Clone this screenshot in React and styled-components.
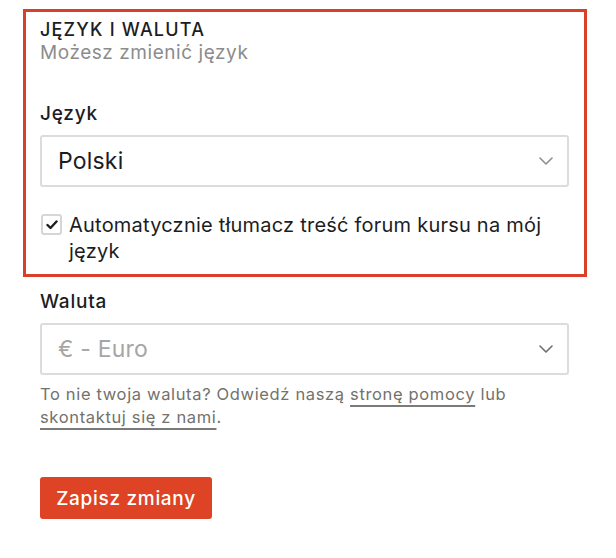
import React, { useState } from 'react';
import styled, { createGlobalStyle } from 'styled-components';

const GlobalStyle = createGlobalStyle`
  body {
    margin: 0;
    background: #fff;
    font-family: Inter, "Noto Sans", sans-serif;
    color: #1c1d1f;
  }
`;

const Page = styled.div`
  width: 529px;
  padding: 9px 0 0 40px;
`;

const Highlight = styled.section`
  margin: 0 -18px 0 -17px;
  border: 3px solid #d8402a;
  padding: 6px 15px 10px 14px;
`;

const Title = styled.h2`
  margin: 0;
  font-size: 18px;
  font-weight: 500;
  line-height: 23px;
  letter-spacing: 1.2px;
  text-transform: uppercase;
`;

const Subtitle = styled.p`
  margin: 0;
  font-size: 19px;
  line-height: 23px;
  color: #8c8c8c;
  letter-spacing: 0.55px;
`;

const Field = styled.div`
  margin-top: ${({ $top }) => $top}px;
`;

const Label = styled.label`
  display: block;
  font-size: 19px;
  font-weight: 500;
  line-height: 23px;
  letter-spacing: 0.8px;
  margin-bottom: 10px;
`;

const SelectBox = styled.div`
  box-sizing: border-box;
  height: 52px;
  border: 2px solid #dcdcdc;
  border-radius: 3px;
  display: flex;
  align-items: center;
  justify-content: space-between;
  padding: 0 14px 0 16px;
`;

const SelectValue = styled.span`
  font-size: 23px;
  color: ${({ $muted }) => ($muted ? '#a6a6a6' : '#1c1d1f')};
  letter-spacing: 0.2px;
`;

const Chevron = styled.svg`
  width: 14px;
  height: 8px;
  color: ${({ $dark }) => ($dark ? '#6f6f6f' : '#8f8f8f')};
`;

const CheckRow = styled.label`
  display: flex;
  gap: 7px;
  margin-top: 25px;
  font-size: 20px;
  line-height: 26px;
  letter-spacing: 0.22px;
  cursor: pointer;
`;

const Box = styled.span`
  flex: none;
  box-sizing: border-box;
  width: 21px;
  height: 21px;
  margin-top: 2px;
  margin-left: 1px;
  border: 2px solid #d6d6d6;
  border-radius: 3px;
  display: flex;
  align-items: center;
  justify-content: center;
`;

const Help = styled.p`
  margin: 8px 0 0;
  font-size: 16.5px;
  line-height: 23px;
  color: #73726c;
  letter-spacing: 0.65px;
`;

const HelpLink = styled.a`
  color: #73726c;
  text-decoration: underline;
  text-decoration-thickness: 2px;
  text-underline-offset: 5px;
  text-decoration-color: #7a7a7a;
`;

const SaveButton = styled.button`
  margin-top: 48px;
  width: 172px;
  height: 42px;
  border: none;
  border-radius: 3px;
  background: #dd4324;
  color: #fff;
  font-family: Inter, "Noto Sans", sans-serif;
  font-size: 19px;
  font-weight: 500;
  letter-spacing: 0.7px;
  cursor: pointer;
`;

const ChevronIcon = ({ dark }) => (
  <Chevron $dark={dark} viewBox="0 0 14 8" fill="none">
    <path d="M1 1l6 6 6-6" stroke="currentColor" strokeWidth="1.6" strokeLinecap="round" strokeLinejoin="round" />
  </Chevron>
);

export default function App() {
  const [translate, setTranslate] = useState(true);

  return (
    <>
      <GlobalStyle />
      <Page>
        <Highlight>
          <Title>Język i waluta</Title>
          <Subtitle>Możesz zmienić język</Subtitle>
          <Field $top={38}>
            <Label>Język</Label>
            <SelectBox>
              <SelectValue>Polski</SelectValue>
              <ChevronIcon />
            </SelectBox>
          </Field>
          <CheckRow onClick={() => setTranslate(!translate)}>
            <Box>
              {translate && (
                <svg width="12" height="10" viewBox="0 0 12 10" fill="none">
                  <path d="M1.5 5l3 3 6-6.5" stroke="#1c1d1f" strokeWidth="2.4" strokeLinecap="round" strokeLinejoin="round" />
                </svg>
              )}
            </Box>
            <span>Automatycznie tłumacz treść forum kursu na mój język</span>
          </CheckRow>
        </Highlight>
        <Field $top={13}>
          <Label>Waluta</Label>
          <SelectBox>
            <SelectValue $muted>€ - Euro</SelectValue>
            <ChevronIcon dark />
          </SelectBox>
        </Field>
        <Help>
          To nie twoja waluta? Odwiedź naszą <HelpLink href="#">stronę pomocy</HelpLink> lub{' '}
          <HelpLink href="#">skontaktuj się z nami</HelpLink>.
        </Help>
        <SaveButton>Zapisz zmiany</SaveButton>
      </Page>
    </>
  );
}
